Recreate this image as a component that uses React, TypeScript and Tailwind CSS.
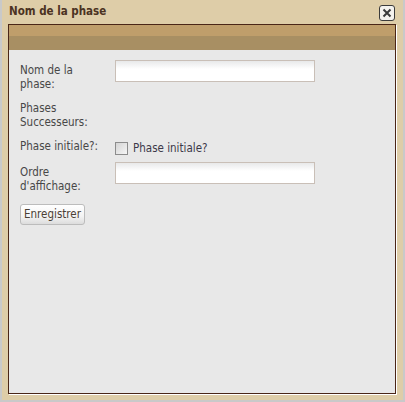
const font = { fontFamily: '"DejaVu Sans Condensed", "DejaVu Sans", sans-serif' }

function TextField() {
  return (
    <input
      type="text"
      className="block w-[200px] h-[22px] border border-[#c9bfb7] bg-[linear-gradient(#e8e9ea,#ffffff_8px)] outline-none"
    />
  )
}

function Label({ children }: { children: React.ReactNode }) {
  return (
    <div className="w-[95px] shrink-0 pt-[3px] text-[11.5px] leading-[14px] text-[#474747]">
      {children}
    </div>
  )
}

export default function App() {
  return (
    <div className="w-[405px] h-[402px] bg-[#c9c9c9] pl-[2px] pr-[2px] pb-[2px]" style={font}>
      <div className="flex flex-col h-full bg-[#decda8] pl-[6px] pr-[7px] pb-[6px]">
        <div className="flex items-center justify-between h-[24px] pr-[1px]">
          <span className="text-[11.5px] font-bold text-[#4b3222] pl-[1px]">Nom de la phase</span>
          <button className="flex items-center justify-center w-[16px] h-[16px] rounded-[3px] border border-[#3b3b3b] bg-[#f4f2ee] mt-[1px]">
            <svg width="10" height="10" viewBox="0 0 10 10">
              <path d="M1.5 1.5 L8.5 8.5 M8.5 1.5 L1.5 8.5" stroke="#3a3a3a" strokeWidth="2" />
            </svg>
          </button>
        </div>
        <div className="flex-1 flex flex-col border border-[#4a2617] bg-[#e8e8e8] shadow-[1px_1px_0_#ffffff]">
          <div className="h-[11px] bg-[#bf9e6b]" />
          <div className="h-[14px] bg-[#a88f63]" />
          <div className="pl-[11px] pt-[10px]">
            <div className="flex h-[38px]">
              <Label>Nom de la<br />phase:</Label>
              <TextField />
            </div>
            <div className="flex h-[38px]">
              <Label>Phases<br />Successeurs:</Label>
            </div>
            <div className="flex h-[26px]">
              <Label>Phase initiale?:</Label>
              <div className="flex items-start pt-[6px]">
                <span className="block w-[13px] h-[13px] border border-[#8c8c8c] bg-[linear-gradient(135deg,#d4d4d4,#f6f6f6)]" />
                <span className="ml-[5px] -mt-[3px] text-[11.5px] leading-[14px] text-[#3c3848] pt-[2px]">Phase initiale?</span>
              </div>
            </div>
            <div className="flex h-[39px]">
              <Label>Ordre<br />d'affichage:</Label>
              <TextField />
            </div>
            <button className="w-[65px] h-[21px] rounded-[3px] border border-[#bcbcbc] bg-[linear-gradient(#ffffff,#f3f3f3_60%,#dcdcdc)] text-[11.5px] text-[#4a4035] leading-none">
              Enregistrer
            </button>
          </div>
        </div>
      </div>
    </div>
  )
}
